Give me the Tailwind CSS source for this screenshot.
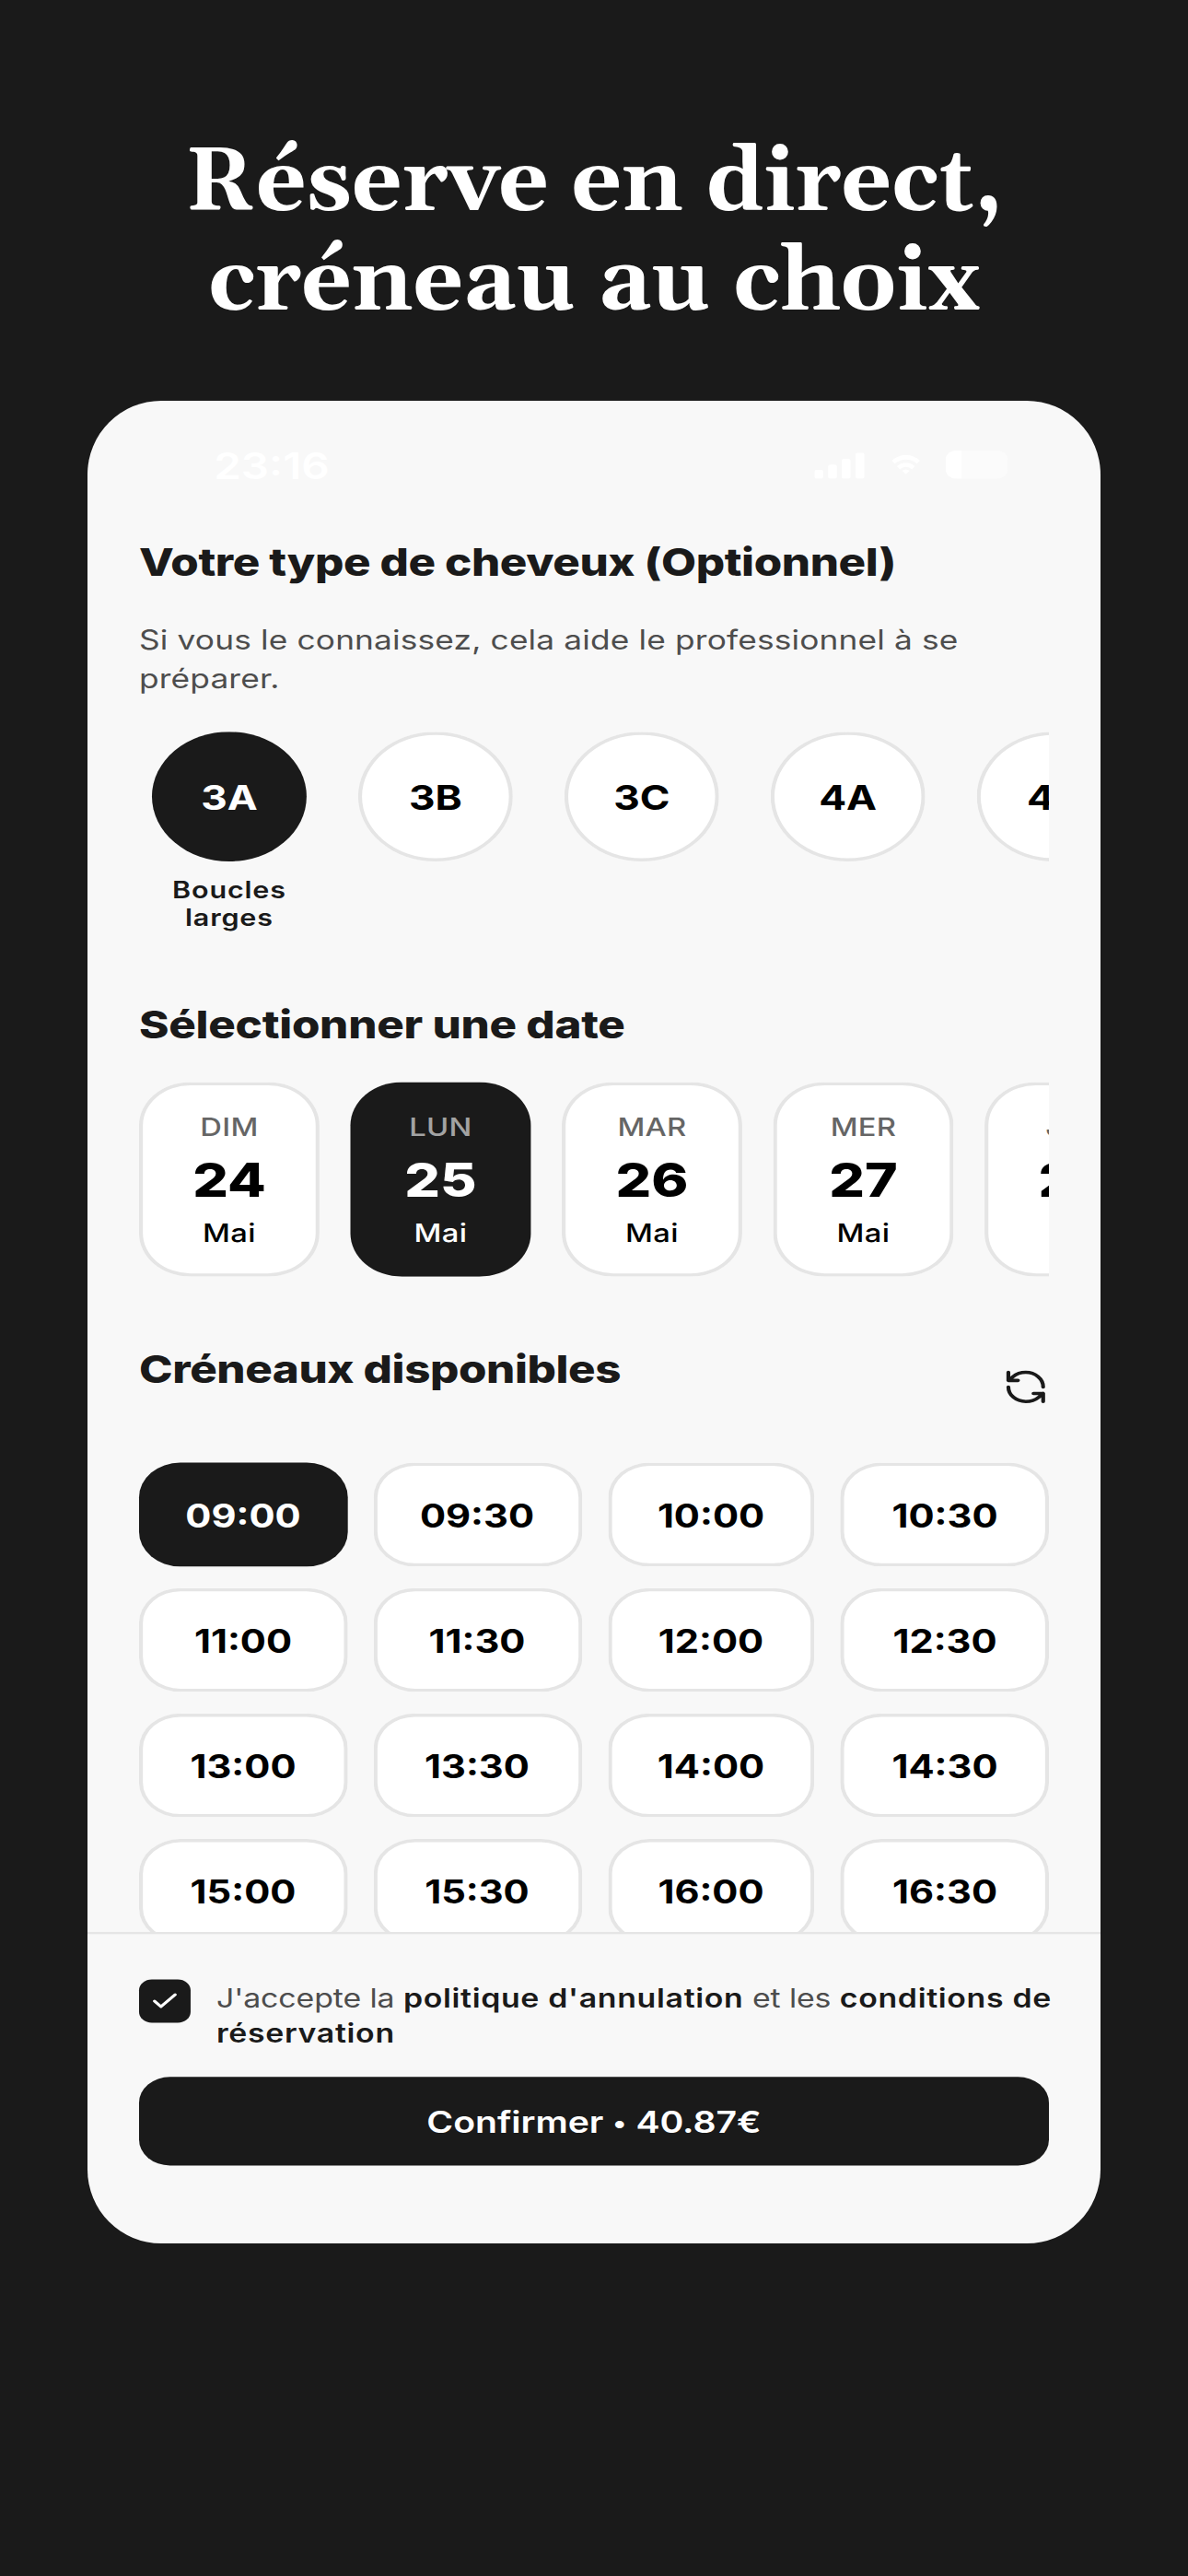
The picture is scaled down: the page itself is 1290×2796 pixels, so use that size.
<!DOCTYPE html>
<html lang="fr">
<head>
  <meta charset="UTF-8" />
  <meta name="viewport" content="width=device-width, initial-scale=1.0" />
  <title>Réserve en direct, créneau au choix</title>
  <script src="https://cdn.jsdelivr.net/npm/@tailwindcss/browser@4"></script>
</head>
<body class="bg-[#1a1a1a] w-[1290px] h-[2796px] overflow-hidden pt-[146px]">
  <h1 class="text-center text-white font-bold text-[96px] leading-[108px] font-[Georgia,Gelasio,'DejaVu_Serif',serif]">Réserve en direct,<br />créneau au choix</h1>

  <!-- Écran : maquette 393x852 agrandie aux dimensions du cadre -->
  <div class="mx-auto mt-[73px] w-[1100px] h-[2000px] rounded-[80px] overflow-hidden bg-[#f8f8f8]">
    <div class="w-[393px] h-[852px] origin-top-left scale-x-[2.799] scale-y-[2.3474] flex flex-col font-[Inter,sans-serif] text-[#1a1a1a]">

      <div class="flex-1 min-h-0 overflow-hidden">
        <!-- Barre d'état -->
        <div class="h-[63.6px] pt-[19.5px] pl-[49px] pr-[36px] flex items-start justify-between text-white">
          <span class="text-[17px] leading-5 font-semibold">23:16</span>
          <div class="flex items-center h-5 gap-[10px]">
            <svg class="w-5 h-3" viewBox="0 0 20 12" fill="currentColor">
              <rect x="0" y="8" width="3.4" height="4" rx="1" />
              <rect x="5.3" y="5.5" width="3.4" height="6.5" rx="1" />
              <rect x="10.6" y="2.8" width="3.4" height="9.2" rx="1" />
              <rect x="16" y="0" width="3.4" height="12" rx="1" />
            </svg>
            <svg class="w-[11px] h-[9px]" viewBox="0 0 17 12" preserveAspectRatio="none" fill="none" stroke="currentColor" stroke-width="2.6">
              <path d="M1 4.5a11 11 0 0 1 15 0M4 8a6.5 6.5 0 0 1 9 0" />
              <path d="M6.3 9.8a3.2 3.2 0 0 1 4.4 0L8.5 12z" fill="currentColor" stroke="none" />
            </svg>
            <div class="w-[24px] h-[13px] rounded-[4px] bg-[#fbfbfb] overflow-hidden"><div class="w-[6px] h-full bg-white"></div></div>
          </div>
        </div>

        <div class="px-5">
          <!-- Type de cheveux -->
          <h2 class="text-[17.6px] leading-[22px] font-extrabold tracking-[-0.14px]">Votre type de cheveux (Optionnel)</h2>
          <p class="mt-4 text-[12.6px] leading-[18px] tracking-[0.06px] text-[#4d4d4d]">Si vous le connaissez, cela aide le professionnel à se<br />préparer.</p>
          <div class="mt-[15.8px] flex gap-[10px] overflow-hidden h-[92.2px]" id="cheveux"></div>

          <!-- Dates -->
          <h2 class="mt-8 text-[17.6px] leading-[22px] font-extrabold tracking-[-0.09px]">Sélectionner une date</h2>
          <div class="mt-[15.6px] flex gap-3 overflow-hidden" id="dates"></div>

          <!-- Créneaux -->
          <div class="mt-8 flex items-center justify-between">
            <h2 class="mb-4 text-[17.6px] leading-[22px] font-extrabold tracking-[-0.14px]">Créneaux disponibles</h2>
            <svg class="w-[18px] h-[18px]" viewBox="0 0 24 24" fill="none" stroke="currentColor" stroke-width="2" stroke-linecap="round" stroke-linejoin="round">
              <path d="M21 12a9 9 0 0 0-9-9 9.75 9.75 0 0 0-6.74 2.74L3 8M3 3v5h5" />
              <path d="M3 12a9 9 0 0 0 9 9 9.75 9.75 0 0 0 6.74-2.74L21 16M16 16h5v5" />
            </svg>
          </div>
          <div class="mt-[15.7px] grid grid-cols-4 gap-[10px]" id="creneaux"></div>
        </div>
      </div>

      <!-- Pied de page -->
      <div class="h-[143.9px] shrink-0 border-t border-[#e5e5e5] px-5 pt-[20.5px]">
        <div class="flex gap-[10px] h-[33.3px]">
          <div class="w-5 h-5 shrink-0 rounded-[5px] bg-[#1a1a1a] flex items-center justify-center">
            <svg class="w-3 h-3 text-white" viewBox="0 0 24 24" fill="none" stroke="currentColor" stroke-width="2.5" stroke-linecap="round" stroke-linejoin="round"><path d="M20 6 9 17l-5-5" /></svg>
          </div>
          <p class="mt-[0.9px] text-[12.1px] leading-[16.9px] tracking-[-0.04px] text-[#4d4d4d] whitespace-nowrap">J'accepte la <b class="font-semibold tracking-[0.24px] text-[#1a1a1a]">politique d'annulation</b> et les <b class="font-semibold tracking-[0.24px] text-[#1a1a1a]">conditions de<br />réservation</b></p>
        </div>
        <button class="mt-3 w-full h-[41px] rounded-xl bg-[#1a1a1a] text-white text-[14px] font-semibold tracking-[-0.02px]">Confirmer <span class="relative -top-px text-[11px]">•</span> 40.87€</button>
      </div>
    </div>
  </div>

  <script>
    const cheveux = [
      { type: "3A", label: "Boucles larges", actif: true },
      { type: "3B" },
      { type: "3C" },
      { type: "4A" },
      { type: "4B" }
    ];

    const dates = [
      { jour: "DIM", num: 24 },
      { jour: "LUN", num: 25, actif: true },
      { jour: "MAR", num: 26 },
      { jour: "MER", num: 27 },
      { jour: "JEU", num: 28 }
    ];

    const creneaux = [
      "09:00", "09:30", "10:00", "10:30",
      "11:00", "11:30", "12:00", "12:30",
      "13:00", "13:30", "14:00", "14:30",
      "15:00", "15:30", "16:00", "16:30"
    ];

    // contour en ombre interne : garde l'épaisseur de 1.5px
    const normal = "bg-white shadow-[inset_0_0_0_1.5px_#e5e5e5] text-black";
    const choisi = "bg-[#1a1a1a] text-white";

    document.getElementById("cheveux").innerHTML = cheveux.map(c => `
      <div class="w-[70px] shrink-0 flex flex-col items-center">
        <div class="w-[60px] h-[60px] shrink-0 rounded-full flex items-center justify-center text-[15.8px] font-bold ${c.actif ? choisi : normal}">${c.type}</div>
        ${c.label ? `<div class="mt-[6.5px] w-[60px] text-center text-[10.9px] leading-[13px] font-semibold tracking-[0.3px]">${c.label}</div>` : ""}
      </div>
    `).join("");

    document.getElementById("dates").innerHTML = dates.map(d => `
      <div class="w-[70px] h-[90px] shrink-0 rounded-[20px] flex flex-col items-center pt-[14px] ${d.actif ? choisi : normal}">
        <span class="text-[11.7px] leading-[15px] font-medium tracking-[0.1px] opacity-60">${d.jour}</span>
        <span class="mt-[3px] text-[21.7px] leading-[26px] font-extrabold">${d.num}</span>
        <span class="mt-[5px] text-[11.7px] leading-[15px] font-medium tracking-[0.15px]">Mai</span>
      </div>
    `).join("");

    document.getElementById("creneaux").innerHTML = creneaux.map((h, i) => `
      <div class="h-12 pt-[2px] rounded-2xl flex items-center justify-center text-[14.9px] font-bold ${i === 0 ? choisi : normal}">${h}</div>
    `).join("");
  </script>
</body>
</html>
